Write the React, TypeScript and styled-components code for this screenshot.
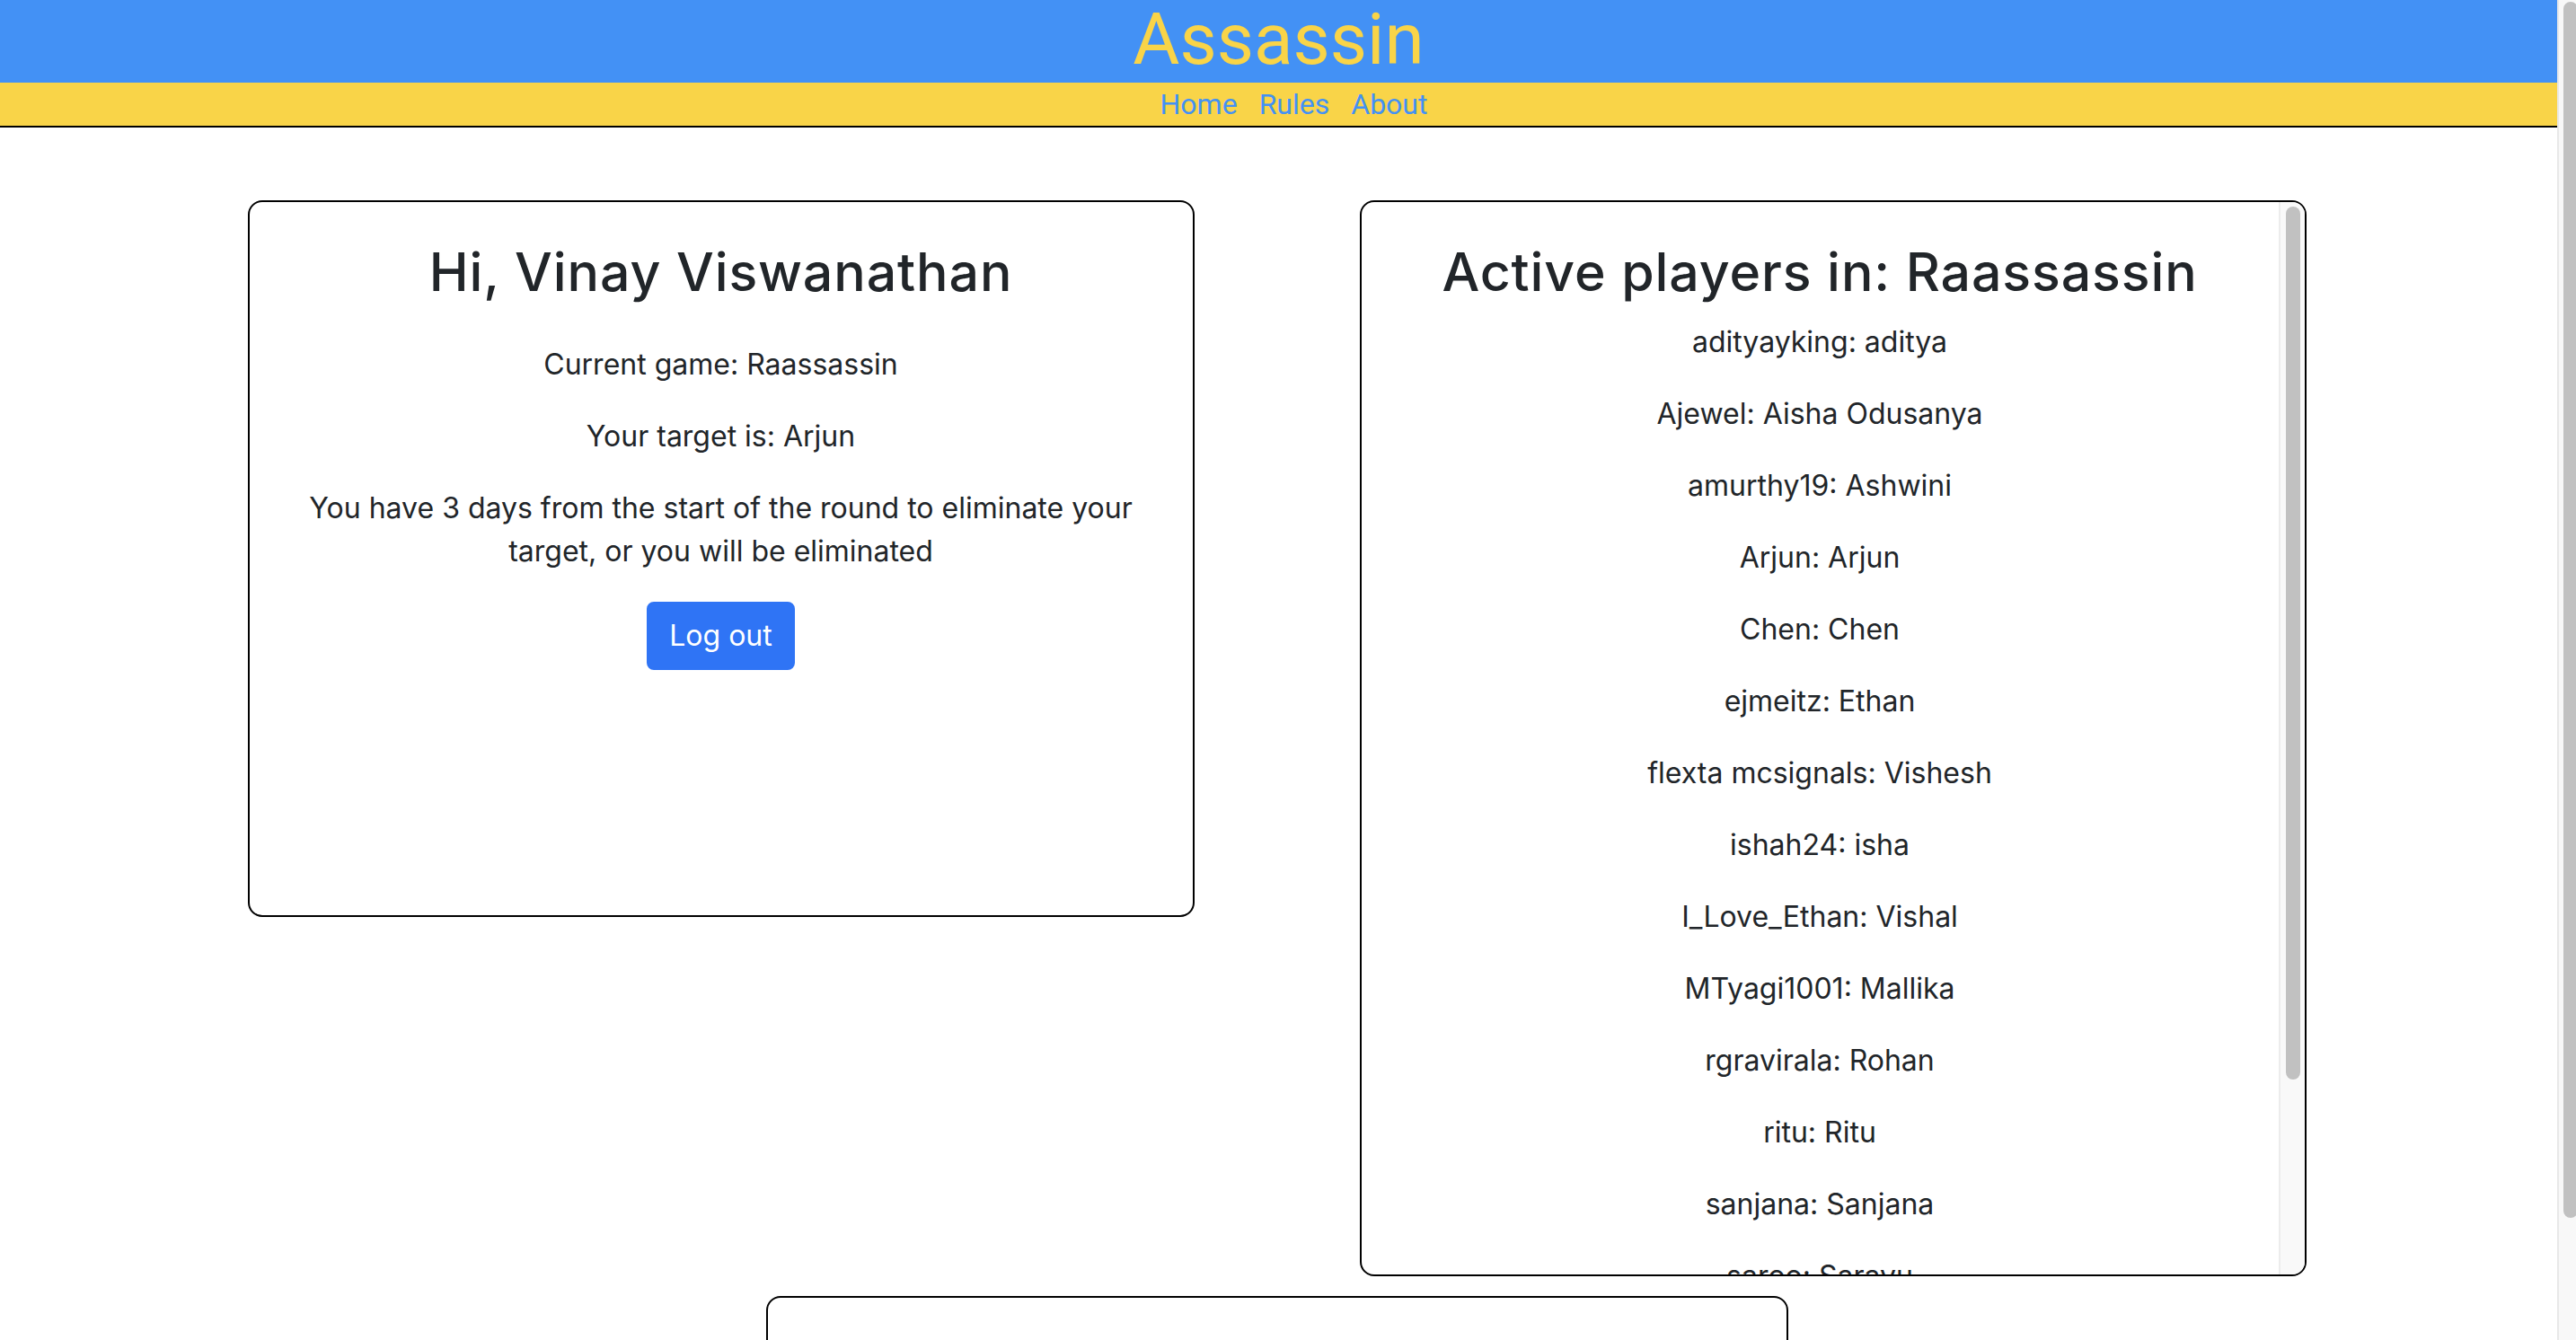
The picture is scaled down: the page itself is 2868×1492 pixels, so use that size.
import React from "react";
import styled, { createGlobalStyle } from "styled-components";

const GlobalStyle = createGlobalStyle`
  html, body {
    margin: 0;
    padding: 0;
    background: #ffffff;
    overflow: hidden;
  }
  body {
    font-family: Inter, "Noto Sans", "Liberation Sans", sans-serif;
    color: #212529;
  }
  *, *::before, *::after { box-sizing: border-box; }
`;

const Shell = styled.div`
  display: flex;
  height: 100vh;
  width: 100vw;
`;

const Viewport = styled.div`
  flex: 1;
  min-width: 0;
  height: 100%;
  overflow: hidden;
`;

const PageRail = styled.div`
  flex: none;
  width: 21px;
  height: 100%;
  background: #f8f8f8;
  border-left: 2px solid #e8e8e8;
  overflow: hidden;
  padding: 2px 0 0 5px;
`;

const PageThumb = styled.div`
  width: 16px;
  height: 1354px;
  background: #c1c1c1;
  border-radius: 8px;
`;

const TitleBar = styled.header`
  height: 92px;
  background: #4391f5;
  display: flex;
  justify-content: center;
  align-items: flex-start;
`;

const Title = styled.h1`
  margin: 0;
  font-family: Roboto, "Liberation Sans", sans-serif;
  font-weight: 400;
  font-size: 80px;
  line-height: 88px;
  color: #f9d448;
`;

const NavBar = styled.nav`
  height: 50px;
  background: #f9d448;
  border-bottom: 2px solid #000;
  display: flex;
  justify-content: center;
  gap: 24px;
  padding-left: 34px;
`;

const NavLink = styled.a`
  font-family: Roboto, "Liberation Sans", sans-serif;
  font-size: 32px;
  line-height: 48px;
  color: #4391f5;
  text-decoration: none;
`;

const Main = styled.main`
  display: flex;
  flex-direction: column;
  align-items: center;
  padding: 81px 4px 16px 0;
`;

const CardRow = styled.div`
  display: flex;
  justify-content: center;
  align-items: flex-start;
  gap: 184px;
`;

const Card = styled.section<{ $height: number; $width: number }>`
  width: ${(p) => p.$width}px;
  height: ${(p) => p.$height}px;
  flex: none;
  border: 2px solid #000;
  border-radius: 16px;
  background: #fff;
  text-align: center;
`;

const ProfileCard = styled(Card)`
  padding: 43px 48px 32px;
`;

const PlayersCard = styled(Card)`
  display: flex;
  overflow: hidden;
`;

const PlayerList = styled.div`
  flex: 1;
  min-width: 0;
  overflow: hidden;
  padding: 43px 16px 40px;
`;

const CardRail = styled.div`
  flex: none;
  width: 29px;
  height: 100%;
  background: #f9f9f9;
  border-left: 2px solid #ececec;
  padding: 5px 0 0 6px;
`;

const CardThumb = styled.div`
  width: 16px;
  height: 972px;
  background: #c1c1c1;
  border-radius: 8px;
`;

const BottomCard = styled(Card)`
  margin-top: 22px;
`;

const Heading = styled.h3<{ $gap: number }>`
  margin: 0 0 ${(p) => p.$gap}px;
  font-size: 59px;
  font-weight: 500;
  letter-spacing: 0.9px;
  line-height: 1.2;
  color: #212529;
`;

const Text = styled.p`
  margin: 0 0 32px;
  font-size: 32px;
  line-height: 48px;
`;

const Button = styled.button`
  font-family: inherit;
  font-size: 32px;
  line-height: 48px;
  padding: 12px 23px;
  color: #fff;
  background: #2f74f5;
  border: 2px solid #2f74f5;
  border-radius: 8px;
  cursor: pointer;
`;

const players = [
  "adityayking: aditya",
  "Ajewel: Aisha Odusanya",
  "amurthy19: Ashwini",
  "Arjun: Arjun",
  "Chen: Chen",
  "ejmeitz: Ethan",
  "flexta mcsignals: Vishesh",
  "ishah24: isha",
  "I_Love_Ethan: Vishal",
  "MTyagi1001: Mallika",
  "rgravirala: Rohan",
  "ritu: Ritu",
  "sanjana: Sanjana",
  "saroo: Sarayu",
  "shreya: Shreya",
  "vinayv: Vinay Viswanathan",
];

export default function App() {
  return (
    <>
      <GlobalStyle />
      <Shell>
        <Viewport>
          <TitleBar>
            <Title>Assassin</Title>
          </TitleBar>
          <NavBar>
            <NavLink href="#">Home</NavLink>
            <NavLink href="#">Rules</NavLink>
            <NavLink href="#">About</NavLink>
          </NavBar>
          <Main>
            <CardRow>
              <ProfileCard $width={1054} $height={798}>
                <Heading $gap={43}>Hi, Vinay Viswanathan</Heading>
                <Text>Current game: Raassassin</Text>
                <Text>Your target is: Arjun</Text>
                <Text>
                  You have 3 days from the start of the round to eliminate your
                  target, or you will be eliminated
                </Text>
                <Button>Log out</Button>
              </ProfileCard>
              <PlayersCard $width={1054} $height={1198}>
                <PlayerList>
                  <Heading $gap={18}>Active players in: Raassassin</Heading>
                  {players.map((p) => (
                    <Text key={p}>{p}</Text>
                  ))}
                </PlayerList>
                <CardRail>
                  <CardThumb />
                </CardRail>
              </PlayersCard>
            </CardRow>
            <BottomCard $width={1138} $height={185} />
          </Main>
        </Viewport>
        <PageRail>
          <PageThumb />
        </PageRail>
      </Shell>
    </>
  );
}
